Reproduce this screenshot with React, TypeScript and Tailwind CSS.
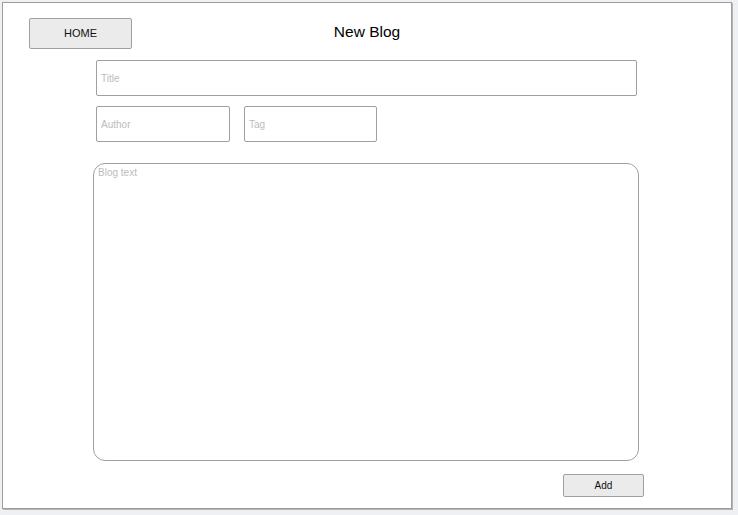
export default function App() {
  return (
    <div className="min-h-[515px] w-[738px] bg-[#eef0f4] pl-[2px] pt-[2px] font-['Liberation_Sans',Arial,sans-serif]">
      <div className="flex h-[507px] w-[730px] flex-col border border-[#9c9c9c] bg-white shadow-[1px_1px_0_#b4b4b4]">
        <header className="relative flex h-[54px] items-start pl-[26px] pt-[15px]">
          <button className="h-[31px] w-[103px] rounded-[2px] border border-[#a0a0a0] bg-[#ebebeb] text-[11px] text-[#111]">
            HOME
          </button>
          <h1 className="absolute left-0 right-0 top-[17px] text-center text-[15.5px] text-black">
            New Blog
          </h1>
        </header>

        <div className="flex flex-col pl-[93px]">
          <input
            placeholder="Title"
            className="mt-[3px] h-[36px] w-[541px] rounded-[2px] border border-[#a0a0a0] px-[4px] text-[10px] outline-none placeholder:text-[#bcbcbc]"
          />
          <div className="mt-[10px] flex gap-[14px]">
            <input
              placeholder="Author"
              className="h-[36px] w-[134px] rounded-[2px] border border-[#a0a0a0] px-[4px] text-[10px] outline-none placeholder:text-[#bcbcbc]"
            />
            <input
              placeholder="Tag"
              className="h-[36px] w-[133px] rounded-[2px] border border-[#a0a0a0] px-[4px] text-[10px] outline-none placeholder:text-[#bcbcbc]"
            />
          </div>
        </div>

        <textarea
          placeholder="Blog text"
          className="ml-[90px] mt-[21px] h-[298px] w-[546px] resize-none rounded-[12px] border border-[#a0a0a0] px-[4px] py-[3px] text-[10px] leading-[12px] outline-none placeholder:text-[#bcbcbc]"
        />

        <div className="flex justify-end pr-[87px] pt-[13px]">
          <button className="h-[23px] w-[81px] rounded-[2px] border border-[#a0a0a0] bg-[#ebebeb] text-[10px] text-[#111]">
            Add
          </button>
        </div>
      </div>
    </div>
  );
}
